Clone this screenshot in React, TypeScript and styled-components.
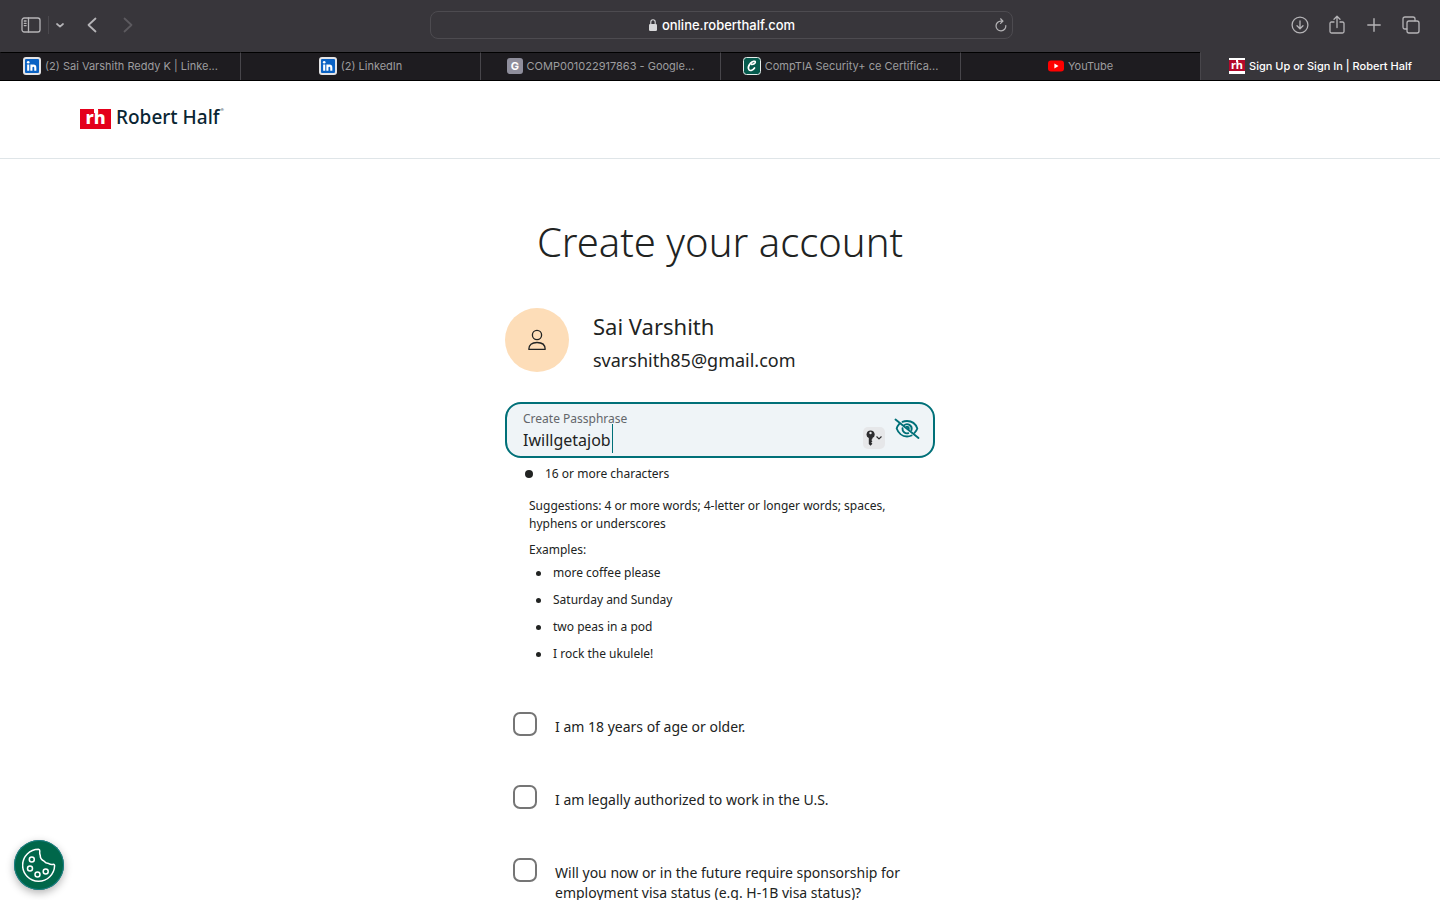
import React, { useState } from "react";
import styled, { createGlobalStyle } from "styled-components";

const GlobalStyle = createGlobalStyle`
  *, *::before, *::after { box-sizing: border-box; }
  html, body { margin: 0; padding: 0; }
  body {
    background: #ffffff;
    color: #212322;
    font-family: "Noto Sans", sans-serif;
    overflow: hidden;
  }
  #root { height: 100vh; }
  h1, p, ul { margin: 0; padding: 0; }
  button { border: 0; padding: 0; background: none; color: inherit; font: inherit; }
`;

const Window = styled.div`
  display: flex;
  flex-direction: column;
  height: 100vh;
`;

const Toolbar = styled.div`
  flex: none;
  display: grid;
  grid-template-columns: 1fr minmax(200px, 583px) 1fr;
  align-items: center;
  height: 52px;
  padding: 0 18px 2px 20px;
  background: #38363b;
  color: #b5b4b7;
  font-family: Inter, sans-serif;
`;

const ToolGroup = styled.div<{ $end?: boolean }>`
  display: flex;
  align-items: center;
  gap: ${(p) => (p.$end ? "15px" : "0")};
  justify-content: ${(p) => (p.$end ? "flex-end" : "flex-start")};
`;

const ToolButton = styled.button<{ $width?: number; $dim?: boolean }>`
  display: flex;
  align-items: center;
  justify-content: center;
  width: ${(p) => p.$width ?? 22}px;
  height: 24px;
  color: ${(p) => (p.$dim ? "#5c5a5f" : "inherit")};
`;

const Divider = styled.span`
  width: 1px;
  height: 18px;
  margin-left: 6px;
  background: #4a484d;
`;

const Spacer = styled.span`
  width: 12px;
`;

const AddressBar = styled.div`
  display: flex;
  align-items: center;
  height: 28px;
  padding: 0 4px 0 20px;
  border: 1px solid #4d4b50;
  border-radius: 8px;
`;

const Address = styled.div`
  flex: 1;
  display: flex;
  align-items: center;
  justify-content: center;
  gap: 5px;
  color: #ffffff;
  font-size: 13px;
  font-weight: 500;
  line-height: 26px;
`;

const TabStrip = styled.nav`
  flex: none;
  display: flex;
  height: 29px;
  border-bottom: 1px solid #000000;
  font-family: Inter, sans-serif;
`;

const Tab = styled.a<{ $active?: boolean }>`
  flex: 1 1 0;
  min-width: 0;
  display: flex;
  align-items: center;
  justify-content: center;
  gap: 4px;
  padding-bottom: 2px;
  border-top: 1px solid ${(p) => (p.$active ? "#38363b" : "#000000")};
  border-left: 1px solid #48464b;
  background: ${(p) => (p.$active ? "#38363b" : "#1e1c20")};
  color: ${(p) => (p.$active ? "#ffffff" : "#9d9c9f")};
  font-size: 11px;
  font-weight: ${(p) => (p.$active ? 500 : 400)};
  line-height: 16px;
  text-decoration: none;
  white-space: nowrap;

  &:first-child { border-left-color: #1e1c20; }
  svg { flex: none; }
`;

const SiteHeader = styled.header`
  flex: none;
  display: flex;
  align-items: flex-start;
  height: 78px;
  padding: 22px 80px;
  border-bottom: 1px solid #dfe5e8;
`;

const Brand = styled.a`
  display: flex;
  align-items: flex-start;
  color: #0a2533;
  text-decoration: none;
`;

const BrandName = styled.span`
  margin-left: 5px;
  font-size: 19px;
  font-weight: 500;
  line-height: 28px;
`;

const BrandMark = styled.svg`
  margin-top: 6px;
`;

const Registered = styled.span`
  margin: 4px 0 0 1px;
  font-size: 4px;
  line-height: 6px;
`;

const Main = styled.main`
  flex: 1;
  min-height: 0;
  overflow: hidden;
  display: flex;
  flex-direction: column;
  align-items: center;
  padding: 53px 20px 0;
`;

const Title = styled.h1`
  font-size: 40px;
  font-weight: 300;
  line-height: 60px;
  text-align: center;
`;

const Form = styled.form`
  width: 100%;
  max-width: 430px;
  margin-top: 36px;
`;

const Profile = styled.div`
  display: flex;
  align-items: center;
  gap: 24px;
  height: 64px;
`;

const Avatar = styled.div`
  flex: none;
  display: flex;
  align-items: center;
  justify-content: center;
  width: 64px;
  height: 64px;
  border-radius: 50%;
  background: #fdddb8;
`;

const ProfileText = styled.div`
  display: flex;
  flex-direction: column;
  gap: 4px;
  padding-top: 4px;
`;

const Name = styled.p`
  font-size: 22px;
  line-height: 32px;
`;

const Email = styled.p`
  font-size: 18px;
  line-height: 28px;
`;

const Field = styled.div`
  position: relative;
  display: flex;
  height: 56px;
  margin-top: 30px;
  padding: 0 13px 0 16px;
  border: 2px solid #007078;
  border-radius: 16px;
  background: #eff4f7;
`;

const FieldText = styled.div`
  flex: 1;
  min-width: 0;
  display: flex;
  flex-direction: column;
  padding-top: 6px;
`;

const FieldLabel = styled.label`
  color: #63666a;
  font-size: 12px;
  line-height: 17px;
`;

const PassInput = styled.input`
  width: 100%;
  height: 26px;
  padding: 0;
  border: 0;
  outline: 0;
  background: none;
  color: #212322;
  font-family: inherit;
  font-size: 16px;
  line-height: 26px;
  caret-color: transparent;
`;

const Caret = styled.span`
  position: absolute;
  left: 105px;
  top: 20px;
  width: 1px;
  height: 29px;
  background: #007078;
`;

const KeyButton = styled.button`
  align-self: flex-end;
  display: flex;
  align-items: center;
  justify-content: center;
  gap: 1px;
  width: 22px;
  height: 22px;
  margin: 0 9px 7px 8px;
  border-radius: 5px;
  background: #e6e7e9;
  color: #2c2c2e;
`;

const EyeButton = styled.button`
  align-self: center;
  display: flex;
  margin-bottom: 2px;
  color: #007078;
`;

const Rules = styled.div`
  padding: 7px 20px 0 24px;
  font-size: 12px;
  line-height: 18px;
`;

const Requirement = styled.p`
  display: flex;
  align-items: center;
  gap: 12px;
  margin-left: -4px;
`;

const Dot = styled.span`
  width: 8px;
  height: 8px;
  border-radius: 50%;
  background: #212322;
`;

const Suggestion = styled.p`
  margin-top: 14px;
`;

const Examples = styled.p`
  margin-top: 8px;
`;

const ExampleList = styled.ul`
  display: flex;
  flex-direction: column;
  gap: 9px;
  margin-top: 5px;
  list-style: none;
`;

const ExampleItem = styled.li`
  display: flex;
  align-items: center;
  gap: 12px;
  padding-left: 7px;

  &::before {
    content: "";
    width: 5px;
    height: 5px;
    border-radius: 50%;
    background: #212322;
  }
`;

const Checks = styled.div`
  display: flex;
  flex-direction: column;
  gap: 48px;
  margin-top: 49px;
  padding-left: 8px;
`;

const CheckRow = styled.label`
  display: flex;
  align-items: flex-start;
  gap: 18px;
  min-height: 25px;
  font-size: 14px;
  line-height: 20px;
`;

const CheckText = styled.span`
  padding-top: 5px;
`;

const CheckBox = styled.input`
  flex: none;
  appearance: none;
  width: 24px;
  height: 24px;
  margin: 0;
  border: 2px solid #757575;
  border-radius: 7px;
  background: #ffffff;

  &:checked { background: #007078; border-color: #007078; }
`;

const CookieButton = styled.button`
  position: fixed;
  left: 14px;
  bottom: 10px;
  display: flex;
  align-items: center;
  justify-content: center;
  width: 50px;
  height: 50px;
  border-radius: 50%;
  background: #00674a;
  box-shadow: 0 3px 8px rgba(0, 0, 0, 0.3), inset 0 0 0 1px #1c7f86;
`;

const LinkedInIcon = () => (
  <svg width="18" height="18" viewBox="0 0 18 18" aria-hidden="true">
    <rect width="18" height="18" rx="3" fill="#e4e4e6" />
    <rect x="2" y="2" width="14" height="14" rx="1" fill="#0a62c4" />
    <circle cx="5.2" cy="5.2" r="1.3" fill="#fff" />
    <path d="M5.2 7.6v6.2M8.4 7.6v6.2M8.4 10.6c0-1.3.8-2 1.9-2s2 .7 2 2.1v3.1" fill="none" stroke="#fff" strokeWidth="2.1" />
  </svg>
);

const LetterIcon = () => (
  <svg width="16" height="16" viewBox="0 0 16 16" aria-hidden="true">
    <rect width="16" height="16" rx="3" fill="#8f8e9c" />
    <text x="8" y="12.4" fill="#fff" fontFamily="Inter, sans-serif" fontSize="11" fontWeight="700" textAnchor="middle">G</text>
  </svg>
);

const CredlyIcon = () => (
  <svg width="18" height="18" viewBox="0 0 18 18" aria-hidden="true">
    <rect x=".5" y=".5" width="17" height="17" rx="3" fill="#055a4d" stroke="#e6eeec" />
    <path d="M8.8 7.4c1.6 0 3.6-1 3.5-2.3-.1-1.4-3-1-4.7 1C6 8 4.800 11 6 12.700c1.300 1.700 4.200.400 5.500-1.700" fill="none" stroke="#fff" strokeWidth="1.7" strokeLinecap="round" />
  </svg>
);

const YouTubeIcon = () => (
  <svg width="16" height="12" viewBox="0 0 16 12" aria-hidden="true">
    <rect y=".5" width="16" height="11" rx="3" fill="#f00" />
    <path d="M6.400 3.600v4.800L10.500 6z" fill="#fff" />
  </svg>
);

const RhTabIcon = () => (
  <svg width="16" height="16" viewBox="0 0 16 16" aria-hidden="true">
    <rect width="16" height="16" fill="#fff" />
    <rect y="2" width="16" height="11" fill="#b3092b" />
    <rect x="7" y="2" width="2" height="2" fill="#fff" />
    <text x="8" y="11" fill="#fff" fontFamily="Noto Sans, sans-serif" fontSize="11" fontWeight="700" textAnchor="middle">rh</text>
  </svg>
);

const tabs = [
  { icon: <LinkedInIcon />, title: "(2) Sai Varshith Reddy K | Linke..." },
  { icon: <LinkedInIcon />, title: "(2) LinkedIn" },
  { icon: <LetterIcon />, title: "COMP001022917863 - Google..." },
  { icon: <CredlyIcon />, title: "CompTIA Security+ ce Certifica..." },
  { icon: <YouTubeIcon />, title: "YouTube" },
  { icon: <RhTabIcon />, title: "Sign Up or Sign In | Robert Half", active: true },
];

const examples = ["more coffee please", "Saturday and Sunday", "two peas in a pod", "I rock the ukulele!"];

const questions = [
  "I am 18 years of age or older.",
  "I am legally authorized to work in the U.S.",
  "Will you now or in the future require sponsorship for employment visa status (e.g. H-1B visa status)?",
];

const line = { fill: "none", stroke: "currentColor", strokeLinecap: "round", strokeLinejoin: "round" } as const;

export default function App() {
  const [pass, setPass] = useState("Iwillgetajob");

  return (
    <Window>
      <GlobalStyle />
      <Toolbar>
        <ToolGroup>
          <ToolButton aria-label="Sidebar">
            <svg width="20" height="16" viewBox="0 0 20 16" {...line} strokeWidth="1.300">
              <rect x="1" y="1" width="18" height="14" rx="2.200" />
              <path d="M7.500 1v14M3.300 4h1.800M3.300 6.300h1.800M3.300 8.600h1.800" />
            </svg>
          </ToolButton>
          <Divider />
          <ToolButton aria-label="Tab groups" $width={22}>
            <svg width="8" height="5" viewBox="0 0 8 5" {...line} strokeWidth="1.700"><path d="M1 1l3 2.600L7 1" /></svg>
          </ToolButton>
          <Spacer />
          <ToolButton aria-label="Back" $width={18}>
            <svg width="10" height="16" viewBox="0 0 10 16" {...line} strokeWidth="1.800"><path d="M8.500 1.500L1.500 8l7 6.500" /></svg>
          </ToolButton>
          <Spacer />
          <ToolButton aria-label="Forward" $width={30} $dim>
            <svg width="10" height="16" viewBox="0 0 10 16" {...line} strokeWidth="1.800"><path d="M1.500 1.500l7 6.500-7 6.500" /></svg>
          </ToolButton>
        </ToolGroup>
        <AddressBar>
          <Address>
            <svg width="8" height="12" viewBox="0 0 8 12" aria-hidden="true">
              <rect y="5" width="8" height="7" rx="1.200" fill="#d8d8da" />
              <path d="M1.800 5.500V3a2.200 2.200 0 014.400 0v2.500" fill="none" stroke="#d8d8da" strokeWidth="1.100" />
            </svg>
            <span>online.roberthalf.com</span>
          </Address>
          <ToolButton aria-label="Reload" $width={14}>
            <svg width="12" height="14" viewBox="0 0 12 14" {...line} strokeWidth="1.200">
              <path d="M10.800 7.600A4.900 4.900 0 116 3.100h1.800M5.600.8L8 3.100 5.600 5.400" />
            </svg>
          </ToolButton>
        </AddressBar>
        <ToolGroup $end>
          <ToolButton aria-label="Downloads">
            <svg width="18" height="18" viewBox="0 0 18 18" {...line} strokeWidth="1.300">
              <circle cx="9" cy="9" r="7.900" /><path d="M9 5v7.500M6 9.700l3 3 3-3" />
            </svg>
          </ToolButton>
          <ToolButton aria-label="Share">
            <svg width="16" height="20" viewBox="0 0 16 20" {...line} strokeWidth="1.300">
              <path d="M5 7H2.500Q1 7 1 8.500v8Q1 18 2.500 18h11q1.500 0 1.500-1.500v-8Q15 7 13.500 7H11M8 12.500V1.500M5 4.300L8 1.300l3 3" />
            </svg>
          </ToolButton>
          <ToolButton aria-label="New tab">
            <svg width="14" height="14" viewBox="0 0 14 14" {...line} strokeWidth="1.400"><path d="M7 .8v12.400M.8 7h12.400" /></svg>
          </ToolButton>
          <ToolButton aria-label="Tab overview">
            <svg width="18" height="18" viewBox="0 0 18 18" {...line} strokeWidth="1.300">
              <rect x="5" y="5" width="12" height="12" rx="2" />
              <path d="M4.800 13H3q-2 0-2-2V3q0-2 2-2h8q2 0 2 2v1.800" />
            </svg>
          </ToolButton>
        </ToolGroup>
      </Toolbar>
      <TabStrip>
        {tabs.map((tab) => (
          <Tab key={tab.title} href="#" $active={tab.active}>
            {tab.icon}
            <span>{tab.title}</span>
          </Tab>
        ))}
      </TabStrip>
      <SiteHeader>
        <Brand href="#">
          <BrandMark width="31" height="20" viewBox="0 0 31 20" aria-hidden="true">
            <rect width="31" height="20" fill="#e4001b" />
            <rect x="14" width="4" height="4" fill="#fff" />
            <text x="15.500" y="15" fill="#fff" fontFamily="Noto Sans, sans-serif" fontSize="18" fontWeight="800" textAnchor="middle">rh</text>
          </BrandMark>
          <BrandName>Robert Half</BrandName>
          <Registered>®</Registered>
        </Brand>
      </SiteHeader>
      <Main>
        <Title>Create your account</Title>
        <Form>
          <Profile>
            <Avatar>
              <svg width="18" height="22" viewBox="0 0 18 22" fill="none" stroke="#212322" strokeWidth="1.300" strokeLinejoin="round">
                <circle cx="9" cy="6" r="4.600" />
                <path d="M.8 20.300c0-4.500 3-6.800 8.200-6.800s8.200 2.300 8.200 6.800z" />
              </svg>
            </Avatar>
            <ProfileText>
              <Name>Sai Varshith</Name>
              <Email>svarshith85@gmail.com</Email>
            </ProfileText>
          </Profile>
          <Field>
            <FieldText>
              <FieldLabel htmlFor="passphrase">Create Passphrase</FieldLabel>
              <PassInput id="passphrase" type="text" value={pass} onChange={(e) => setPass(e.target.value)} />
            </FieldText>
            <Caret />
            <KeyButton type="button" aria-label="Saved passwords">
              <svg width="9" height="16" viewBox="0 0 9 16" fill="currentColor">
                <path fillRule="evenodd" d="M4.500.5a4 4 0 00-1.700 7.600v6L4.500 15.700l1.900-1.900-1.200-1.300 1.200-1.300-1.100-1.200 1.100-1V8.100A4 4 0 004.500.5zm0 1.300a1.200 1.200 0 110 2.400 1.200 1.200 0 010-2.400z" />
              </svg>
              <svg width="6" height="4" viewBox="0 0 6 4" {...line} strokeWidth="1.200"><path d="M.8.8L3 2.900 5.200.8" /></svg>
            </KeyButton>
            <EyeButton type="button" aria-label="Hide passphrase">
              <svg width="26" height="22" viewBox="0 0 26 22" {...line} strokeWidth="1.900">
                <path d="M8.500 3.800C9.900 3.200 11.400 3 13 3c5 0 8.800 3.200 10.300 7.500-.6 1.700-1.500 3.200-2.800 4.400M5.300 5.800A11.500 11.500 0 002.700 10.500C4.200 14.800 8 18.500 13 18.500c1.700 0 3.200-.4 4.600-1" />
                <path d="M10 7.400A4.600 4.600 0 0117.500 12M8.500 10.300a4.600 4.600 0 005.800 4.900M12.800 8.800a2 2 0 012 1.900" />
                <path d="M1.500 1.500l23 18.500" />
              </svg>
            </EyeButton>
          </Field>
          <Rules>
            <Requirement><Dot />16 or more characters</Requirement>
            <Suggestion>Suggestions: 4 or more words; 4-letter or longer words; spaces, hyphens or underscores</Suggestion>
            <Examples>Examples:</Examples>
            <ExampleList>
              {examples.map((text) => <ExampleItem key={text}>{text}</ExampleItem>)}
            </ExampleList>
          </Rules>
          <Checks>
            {questions.map((text) => (
              <CheckRow key={text}>
                <CheckBox type="checkbox" />
                <CheckText>{text}</CheckText>
              </CheckRow>
            ))}
          </Checks>
        </Form>
      </Main>
      <CookieButton aria-label="Cookie settings">
        <svg width="34" height="34" viewBox="0 0 34 34" fill="none" stroke="#fff" strokeWidth="1.500" strokeLinejoin="round">
          <path d="M16.500 1.200A16 16 0 1032.600 17.500c-.1-1-.9-1.300-2-1.100-1.500.2-2.500 0-3.900-.8-1.600-.2-3.500-.9-4.600-2.400-2.200-1.200-4-3.500-3.800-5.700-.9-1.500-.6-2.900-.5-4.500 0-1.200-.4-1.800-1.300-1.800z" />
          <circle cx="9.800" cy="11.500" r="2.500" />
          <circle cx="8" cy="20.500" r="2.500" />
          <circle cx="15.500" cy="26.500" r="2.500" />
          <circle cx="23.700" cy="23.500" r="2.500" />
        </svg>
      </CookieButton>
    </Window>
  );
}
